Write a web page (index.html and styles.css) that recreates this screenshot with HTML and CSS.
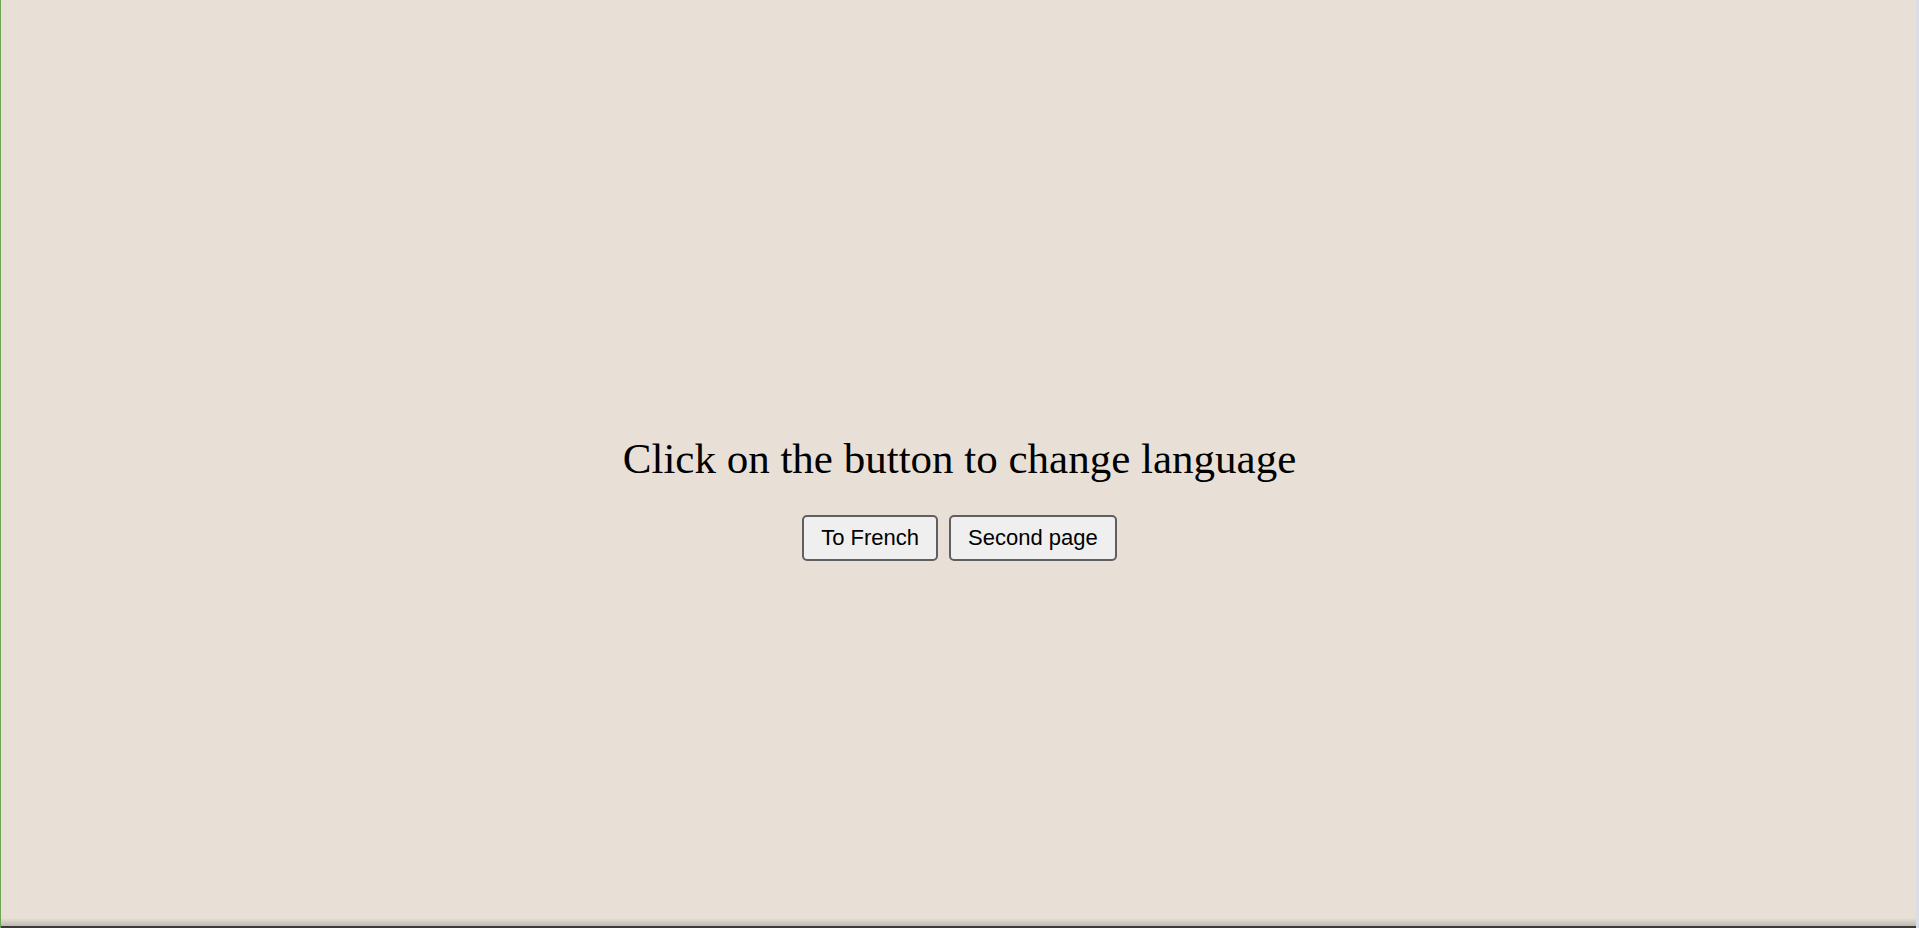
FILE: index.html
```html
<!DOCTYPE html>
<html lang="en">
<head>
<meta charset="utf-8">
<title>Language</title>
<link rel="stylesheet" href="styles.css">
</head>
<body>
<div class="frame">
  <main class="page">
    <h1 class="title">Click on the button to change language</h1>
    <div class="actions">
      <button class="btn" type="button">To French</button>
      <button class="btn" type="button">Second page</button>
    </div>
  </main>
  <div class="bottom-edge"></div>
</div>
</body>
</html>
```

FILE: styles.css
```css
html, body {
  margin: 0;
  padding: 0;
  height: 100%;
}
body {
  background: #e8e0d6;
  font-family: "Liberation Serif", "Times New Roman", serif;
  overflow: hidden;
}
.frame {
  height: 928px;
  display: flex;
  flex-direction: column;
  border-left: 1px solid #6aa84f;
  border-right: 3px solid #d9dee6;
  box-sizing: border-box;
}
.page {
  flex: 1;
  display: flex;
  flex-direction: column;
  align-items: center;
  justify-content: center;
  padding-top: 76px;
  padding-left: 2px;
}
.title {
  margin: 0;
  font-weight: normal;
  font-size: 43px;
  line-height: 52px;
  color: #000;
}
.actions {
  display: flex;
  gap: 11px;
  margin-top: 30px;
}
.btn {
  font-family: "Liberation Sans", Arial, sans-serif;
  font-size: 22px;
  color: #000;
  background: #efefef;
  border: 2px solid #5f5f5f;
  border-radius: 5px;
  height: 46px;
  padding: 0 17px;
}
.bottom-edge {
  height: 10px;
  background: linear-gradient(#e8e0d6, #bdb8b2 80%, #3a3a3a 80%, #3a3a3a);
}
```
